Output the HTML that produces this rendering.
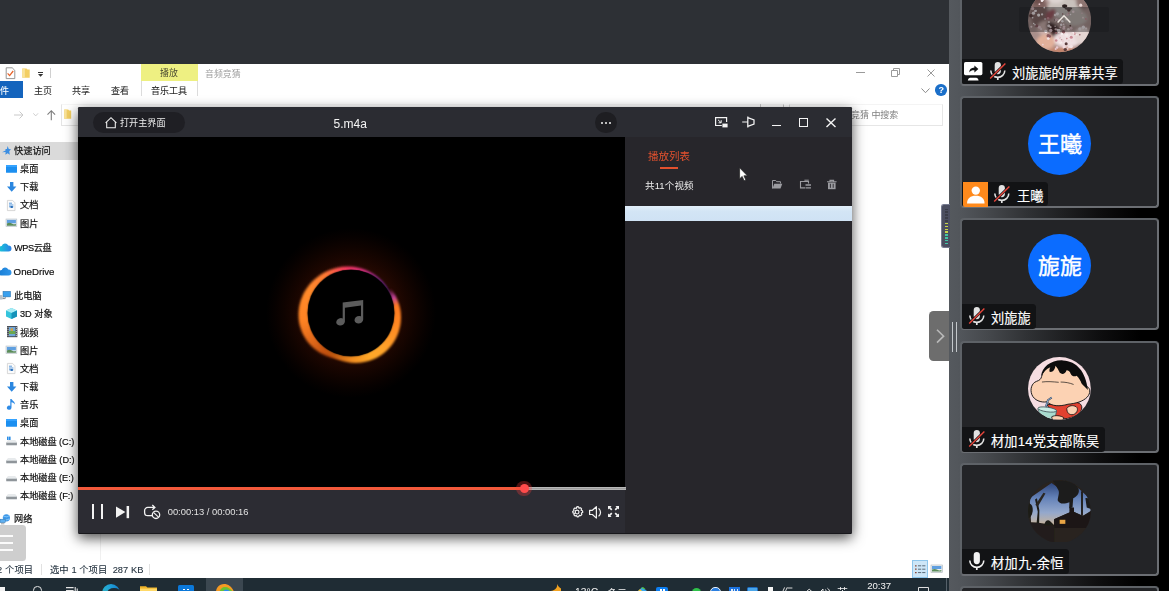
<!DOCTYPE html>
<html lang="zh"><head><meta charset="utf-8"><title>Meeting screen share</title>
<style>
html,body{margin:0;padding:0}
body{width:1174px;height:591px;overflow:hidden;position:relative;background:#000;font-family:"Liberation Sans",sans-serif}
#share{position:absolute;left:0;top:0;width:949px;height:591px;overflow:hidden;background:#2d3035}
#blur{position:absolute;left:-10px;top:-10px;width:980px;height:620px;background:#2d3035;filter:blur(.3px)}
#blur>div#o{position:absolute;left:10px;top:10px}
#side{position:absolute;left:949px;top:0;width:220px;height:591px;background:linear-gradient(to right,#55595e 0px,#52565b 11px,#45484c 39px,#303235 77px,#1e1f21 115px,#0d0d0e 153px,#000 191px)}
#edge{position:absolute;left:1169px;top:0;width:5px;height:591px;background:#fff}
svg text{font-family:"Liberation Sans","Noto Sans CJK SC",sans-serif;white-space:pre}
</style></head><body>
<div id="share"><div id="blur"><div id="o">
<div style="position:absolute;left:-10.00px;top:64.00px;width:969.00px;height:514.00px;background:#fff;"></div>
<svg style="position:absolute;left:5.00px;top:67.00px;overflow:visible;" width="11.00" height="12.50" viewBox="0 0 11 12.5"><path d="M1.2 .8h6l2.6 2.6v8.2h-8.6z" fill="#fff" stroke="#8a8a8a" stroke-width=".9"/><path d="M2.6 6.4l2 2.2 3.6-4.6" fill="none" stroke="#e8632a" stroke-width="1.3"/></svg>
<svg style="position:absolute;left:22.40px;top:67.80px;overflow:visible;" width="8.00" height="10.00" viewBox="0 0 8 10"><path d="M.3 .6h4.2l1 .9h2.2v8.2h-7.4z" fill="#f3cf63"/><path d="M.3 .6h2.6v9.1h-2.6z" fill="#f9e39a"/></svg>
<div style="position:absolute;left:37.80px;top:71.60px;width:5.20px;height:1.00px;background:#333;"></div>
<svg style="position:absolute;left:37.80px;top:73.60px;overflow:visible;" width="5.20" height="2.80" viewBox="0 0 5.2 2.8"><path d="M0 0h5.2l-2.6 2.8z" fill="#333"/></svg>
<div style="position:absolute;left:50.00px;top:68.00px;width:1.00px;height:10.00px;background:#d0d0d0;"></div>
<div style="position:absolute;left:141.00px;top:64.00px;width:57.00px;height:17.00px;background:#eef082;"></div>
<svg role="img" aria-label="播放" style="position:absolute;left:160.30px;top:67.75px;overflow:visible;" width="17.80" height="11.57"><text x="0" y="7.83" font-size="8.9" fill="#4d4d33" textLength="17.80">播放</text></svg>
<svg role="img" aria-label="音频竞猜" style="position:absolute;left:204.70px;top:68.55px;overflow:visible;" width="35.60" height="11.57"><text x="0" y="7.83" font-size="8.9" fill="#9d9d9d" textLength="35.60">音频竞猜</text></svg>
<div style="position:absolute;left:856.00px;top:72.00px;width:8.50px;height:1.00px;background:#9a9a9a;"></div>
<svg style="position:absolute;left:890.50px;top:68.00px;overflow:visible;" width="9.00" height="9.00" viewBox="0 0 9 9"><path d="M.5 2.5h6v6h-6z M2.5 2.5v-2h6v6h-2" fill="none" stroke="#9a9a9a" stroke-width="1"/></svg>
<svg style="position:absolute;left:926.50px;top:68.50px;overflow:visible;" width="8.00" height="8.00" viewBox="0 0 8 8"><path d="M.5 .5l7 7M7.5 .5l-7 7" stroke="#9a9a9a" stroke-width="1" fill="none"/></svg>
<div style="position:absolute;left:0.00px;top:81.00px;width:23.00px;height:17.00px;background:#1464bd;"></div>
<div style="position:absolute;left:0;top:81px;width:949px;height:14.2px;overflow:hidden">
<svg role="img" aria-label="文件" style="position:absolute;left:-8.60px;top:5.10px;overflow:visible;" width="18.00" height="11.70"><text x="0" y="7.92" font-size="9" fill="#fff" stroke="#fff" stroke-width=".072" textLength="18.00">文件</text></svg>
<svg role="img" aria-label="主页" style="position:absolute;left:33.80px;top:5.30px;overflow:visible;" width="18.00" height="11.70"><text x="0" y="7.92" font-size="9" fill="#262626" stroke="#262626" stroke-width=".072" textLength="18.00">主页</text></svg>
<svg role="img" aria-label="共享" style="position:absolute;left:72.40px;top:5.30px;overflow:visible;" width="18.00" height="11.70"><text x="0" y="7.92" font-size="9" fill="#262626" stroke="#262626" stroke-width=".072" textLength="18.00">共享</text></svg>
<svg role="img" aria-label="查看" style="position:absolute;left:111.20px;top:5.30px;overflow:visible;" width="18.00" height="11.70"><text x="0" y="7.92" font-size="9" fill="#262626" stroke="#262626" stroke-width=".072" textLength="18.00">查看</text></svg>
<svg role="img" aria-label="音乐工具" style="position:absolute;left:151.00px;top:5.30px;overflow:visible;" width="36.00" height="11.70"><text x="0" y="7.92" font-size="9" fill="#262626" stroke="#262626" stroke-width=".072" textLength="36.00">音乐工具</text></svg>
</div>
<div style="position:absolute;left:140.60px;top:81.00px;width:1.00px;height:14.50px;background:#dcdcdc;"></div>
<div style="position:absolute;left:197.30px;top:81.00px;width:1.00px;height:14.50px;background:#dcdcdc;"></div>
<svg style="position:absolute;left:920.50px;top:87.50px;overflow:visible;" width="9.00" height="5.50" viewBox="0 0 9 5.5"><path d="M.5 .5l4 4.2 4-4.2" fill="none" stroke="#8c8c8c" stroke-width="1"/></svg>
<div style="position:absolute;left:935.3px;top:84.3px;width:11.4px;height:11.4px;border-radius:50%;background:#1b6fc9"></div>
<div style="position:absolute;left:938.50px;top:84.90px;height:10.80px;line-height:10.80px;font-size:9.00px;color:#fff;white-space:pre;font-weight:bold">?</div>
<svg style="position:absolute;left:14.00px;top:110.50px;overflow:visible;" width="10.00" height="8.00" viewBox="0 0 10 8"><path d="M0 4h9M5.5 .5l3.5 3.5-3.5 3.5" fill="none" stroke="#c9c9c9" stroke-width="1"/></svg>
<svg style="position:absolute;left:33.00px;top:112.60px;overflow:visible;" width="5.40" height="3.60" viewBox="0 0 5.4 3.6"><path d="M.3 .3l2.4 2.6 2.4-2.6" fill="none" stroke="#c9c9c9" stroke-width=".9"/></svg>
<svg style="position:absolute;left:46.80px;top:109.80px;overflow:visible;" width="8.60" height="10.20" viewBox="0 0 8.6 10.2"><path d="M4.3 10.2v-9.4M.5 4.6l3.8-3.9 3.8 3.9" fill="none" stroke="#7d7d7d" stroke-width="1.1"/></svg>
<div style="position:absolute;left:60.5px;top:103.5px;width:723.5px;height:22px;border:1px solid #e4e4e4;border-top-color:#f6f6f6;border-right-color:#c4c4c4;box-sizing:border-box"></div>
<div style="position:absolute;left:760.00px;top:103.50px;width:1.00px;height:21.00px;background:#c8c8c8;"></div>
<div style="position:absolute;left:789.4px;top:103.5px;width:153.6px;height:22px;border:1px solid #e6e6e6;border-top-color:#f4f4f4;border-left-color:#dcdcdc;box-sizing:border-box"></div>
<svg style="position:absolute;left:64.00px;top:108.80px;overflow:visible;" width="7.40" height="10.00" viewBox="0 0 7.4 10"><path d="M.2 .6h4l1 .9h2v8.2h-7z" fill="#f3cf63"/><path d="M.2 .6h2.5v9.1h-2.5z" fill="#f9e39a"/></svg>
<svg role="img" aria-label="竞猜 中搜索" style="position:absolute;left:851.20px;top:110.30px;overflow:visible;" width="47.34" height="11.70"><text x="0" y="7.92" font-size="9" fill="#7f7f7f" textLength="47.34">竞猜 中搜索</text></svg>
<div style="position:absolute;left:0.00px;top:142.00px;width:90.00px;height:18.00px;background:#dadada;"></div>
<svg style="position:absolute;left:1.50px;top:146.00px;overflow:visible;" width="9.00" height="9.40" viewBox="0 0 9 9.4"><path d="M5.6 0l1.2 3 2.2.3-1.7 2 .5 3.4-2.2-1.4-2.2 1.4.2-2.6-3.6.2 3.5-1.9 0-1.3 1.4-.1z" fill="#3b8ee2"/></svg>
<svg role="img" aria-label="快速访问" style="position:absolute;left:13.80px;top:146.40px;overflow:visible;" width="36.80" height="11.96"><text x="0" y="8.10" font-size="9.2" fill="#111" stroke="#111" stroke-width=".2" textLength="36.80">快速访问</text></svg>
<svg style="position:absolute;left:6.00px;top:165.20px;overflow:visible;" width="11.00" height="7.80" viewBox="0 0 11 7.8"><rect width="11" height="7.8" rx=".6" fill="#1c8ff0"/><rect x="0" y="0" width="11" height="2" fill="#35a3ff"/></svg>
<svg role="img" aria-label="桌面" style="position:absolute;left:20.00px;top:164.20px;overflow:visible;" width="18.40" height="11.96"><text x="0" y="8.10" font-size="9.2" fill="#111" stroke="#111" stroke-width=".2" textLength="18.40">桌面</text></svg>
<svg style="position:absolute;left:6.80px;top:182.20px;overflow:visible;" width="9.40" height="9.80" viewBox="0 0 9.4 9.8"><path d="M3 0h3.4v4.6h3l-4.7 5.2-4.7-5.2h3z" fill="#2b87e0"/></svg>
<svg role="img" aria-label="下载" style="position:absolute;left:20.00px;top:182.30px;overflow:visible;" width="18.40" height="11.96"><text x="0" y="8.10" font-size="9.2" fill="#111" stroke="#111" stroke-width=".2" textLength="18.40">下载</text></svg>
<svg style="position:absolute;left:7.00px;top:199.80px;overflow:visible;" width="8.40" height="11.00" viewBox="0 0 8.4 11"><path d="M.4 .4h5.2l2.4 2.4v7.8h-7.6z" fill="#fbfbfb" stroke="#c9c9c9" stroke-width=".7"/><path d="M2 3.2h3M2 5h4.4M2 6.8h4.4" stroke="#4a90d8" stroke-width=".9"/><rect x="3.6" y="6" width="2.2" height="2" fill="#2d6fb8"/></svg>
<svg role="img" aria-label="文档" style="position:absolute;left:20.00px;top:200.40px;overflow:visible;" width="18.40" height="11.96"><text x="0" y="8.10" font-size="9.2" fill="#111" stroke="#111" stroke-width=".2" textLength="18.40">文档</text></svg>
<svg style="position:absolute;left:6.40px;top:219.20px;overflow:visible;" width="10.80" height="7.60" viewBox="0 0 10.8 7.6"><rect width="10.8" height="7.6" fill="#e9eef2" stroke="#b8c0c6" stroke-width=".6"/><rect x=".9" y=".9" width="9" height="3.4" fill="#5f9fe0"/><path d="M.9 6.7v-2.2c2-1.4 4-.6 5.4.2s2.6.8 3.6 0v2z" fill="#5b8c5a"/></svg>
<svg role="img" aria-label="图片" style="position:absolute;left:20.00px;top:218.60px;overflow:visible;" width="18.40" height="11.96"><text x="0" y="8.10" font-size="9.2" fill="#111" stroke="#111" stroke-width=".2" textLength="18.40">图片</text></svg>
<svg style="position:absolute;left:-1.00px;top:243.00px;overflow:visible;" width="12.00" height="8.60" viewBox="0 0 12 8.6"><defs><linearGradient id="cg243" x1="0" x2="1"><stop offset="0" stop-color="#19c6d6"/><stop offset="1" stop-color="#2a7fe8"/></linearGradient></defs><path d="M3 8.6a2.8 2.8 0 0 1-.3-5.6 3.6 3.6 0 0 1 6.6-.6 3.1 3.1 0 0 1 .2 6.200z" fill="url(#cg243)"/></svg>
<svg role="img" aria-label="WPS云盘" style="position:absolute;left:14.00px;top:243.00px;overflow:visible;" width="37.78" height="11.96"><text x="0" y="8.10" font-size="9.2" fill="#111" stroke="#111" stroke-width=".2" textLength="37.78">WPS云盘</text></svg>
<svg style="position:absolute;left:-1.00px;top:267.40px;overflow:visible;" width="12.00" height="8.60" viewBox="0 0 12 8.6"><defs><linearGradient id="cg267" x1="0" x2="1"><stop offset="0" stop-color="#1a7fd6"/><stop offset="1" stop-color="#2f95ea"/></linearGradient></defs><path d="M3 8.6a2.8 2.8 0 0 1-.3-5.6 3.6 3.6 0 0 1 6.6-.6 3.1 3.1 0 0 1 .2 6.200z" fill="url(#cg267)"/></svg>
<svg style="position:absolute;left:0.00px;top:291.00px;overflow:visible;" width="11.00" height="9.60" viewBox="0 0 11 9.6"><rect x="3" y=".3" width="7.6" height="5.6" fill="#39a0ee" stroke="#2d6fa8" stroke-width=".5"/><path d="M5.2 6v1.600h-2.400M0 7.200h4" stroke="#7c858c" stroke-width=".9" fill="none"/><rect x="0" y="4" width="2.6" height="4.6" fill="#b9c2c9"/></svg>
<svg role="img" aria-label="此电脑" style="position:absolute;left:14.00px;top:291.30px;overflow:visible;" width="27.60" height="11.96"><text x="0" y="8.10" font-size="9.2" fill="#111" stroke="#111" stroke-width=".2" textLength="27.60">此电脑</text></svg>
<svg style="position:absolute;left:6.00px;top:308.00px;overflow:visible;" width="11.00" height="11.00" viewBox="0 0 11 11"><path d="M5.5 0l5.5 2.400v6l-5.5 2.6-5.5-2.600v-6z" fill="#35c4dc"/><path d="M5.5 0l5.5 2.4-5.5 2.6-5.5-2.600z" fill="#a8ecf4"/><path d="M5.5 5v6l5.5-2.600v-6z" fill="#1592b8"/></svg>
<svg role="img" aria-label="3D 对象" style="position:absolute;left:20.00px;top:309.40px;overflow:visible;" width="32.60" height="11.96"><text x="0" y="8.10" font-size="9.2" fill="#111" stroke="#111" stroke-width=".2" textLength="32.60">3D 对象</text></svg>
<svg style="position:absolute;left:6.60px;top:326.40px;overflow:visible;" width="10.40" height="11.20" viewBox="0 0 10.4 11.2"><rect width="10.4" height="11.2" fill="#4a4f58"/><rect x="2" y="1" width="6.4" height="9.2" fill="#6fa6d8"/><rect x="2" y="5" width="6.4" height="3" fill="#6aa84f"/><rect x="3.6" y="2.4" width="2.4" height="2.4" fill="#e0a030"/><path d="M1 1v9.4M9.4 1v9.4" stroke="#d8d8d8" stroke-width=".8" stroke-dasharray="1 1"/></svg>
<svg role="img" aria-label="视频" style="position:absolute;left:20.00px;top:327.60px;overflow:visible;" width="18.40" height="11.96"><text x="0" y="8.10" font-size="9.2" fill="#111" stroke="#111" stroke-width=".2" textLength="18.40">视频</text></svg>
<svg style="position:absolute;left:6.40px;top:346.20px;overflow:visible;" width="10.80" height="7.60" viewBox="0 0 10.8 7.6"><rect width="10.8" height="7.6" fill="#e9eef2" stroke="#b8c0c6" stroke-width=".6"/><rect x=".9" y=".9" width="9" height="3.4" fill="#5f9fe0"/><path d="M.9 6.7v-2.2c2-1.4 4-.6 5.4.2s2.6.8 3.6 0v2z" fill="#5b8c5a"/></svg>
<svg role="img" aria-label="图片" style="position:absolute;left:20.00px;top:345.80px;overflow:visible;" width="18.40" height="11.96"><text x="0" y="8.10" font-size="9.2" fill="#111" stroke="#111" stroke-width=".2" textLength="18.40">图片</text></svg>
<svg style="position:absolute;left:7.00px;top:363.00px;overflow:visible;" width="8.40" height="11.00" viewBox="0 0 8.4 11"><path d="M.4 .4h5.2l2.4 2.4v7.8h-7.6z" fill="#fbfbfb" stroke="#c9c9c9" stroke-width=".7"/><path d="M2 3.2h3M2 5h4.4M2 6.8h4.4" stroke="#4a90d8" stroke-width=".9"/><rect x="3.6" y="6" width="2.2" height="2" fill="#2d6fb8"/></svg>
<svg role="img" aria-label="文档" style="position:absolute;left:20.00px;top:363.80px;overflow:visible;" width="18.40" height="11.96"><text x="0" y="8.10" font-size="9.2" fill="#111" stroke="#111" stroke-width=".2" textLength="18.40">文档</text></svg>
<svg style="position:absolute;left:6.80px;top:381.60px;overflow:visible;" width="9.40" height="9.80" viewBox="0 0 9.4 9.8"><path d="M3 0h3.4v4.6h3l-4.7 5.2-4.7-5.2h3z" fill="#2b87e0"/></svg>
<svg role="img" aria-label="下载" style="position:absolute;left:20.00px;top:381.90px;overflow:visible;" width="18.40" height="11.96"><text x="0" y="8.10" font-size="9.2" fill="#111" stroke="#111" stroke-width=".2" textLength="18.40">下载</text></svg>
<svg style="position:absolute;left:7.00px;top:399.00px;overflow:visible;" width="8.60" height="11.20" viewBox="0 0 8.6 11.2"><path d="M3.3 0h1.2c.6 1.6 3.6 2.4 3.4 5.6-.6-1.6-2-2.2-3.4-2.4v5.4a2.3 2.1 0 1 1-1.2-1.8z" fill="#2e8be6"/></svg>
<svg role="img" aria-label="音乐" style="position:absolute;left:20.00px;top:400.00px;overflow:visible;" width="18.40" height="11.96"><text x="0" y="8.10" font-size="9.2" fill="#111" stroke="#111" stroke-width=".2" textLength="18.40">音乐</text></svg>
<svg style="position:absolute;left:6.00px;top:418.80px;overflow:visible;" width="11.00" height="7.80" viewBox="0 0 11 7.8"><rect width="11" height="7.8" rx=".6" fill="#1c8ff0"/><rect x="0" y="0" width="11" height="2" fill="#35a3ff"/></svg>
<svg role="img" aria-label="桌面" style="position:absolute;left:20.00px;top:418.20px;overflow:visible;" width="18.40" height="11.96"><text x="0" y="8.10" font-size="9.2" fill="#111" stroke="#111" stroke-width=".2" textLength="18.40">桌面</text></svg>
<svg style="position:absolute;left:5.80px;top:439.00px;overflow:visible;" width="11.20" height="6.40" viewBox="0 0 11.2 6.4"><path d="M.3 3.6l1.6-2.2h7.4l1.6 2.2v2.6h-10.6z" fill="#cfd3d6"/><rect x=".3" y="3.6" width="10.6" height="2.6" fill="#8f959a"/><path d="M.3 3.6l1.6-2.2h7.4l1.6 2.2z" fill="#e8ebed"/><rect x="1" y="-2.4" width="1.6" height="3.4" fill="#2b8de6"/><rect x="3" y="-2.4" width="1.6" height="3.4" fill="#2b8de6"/></svg>
<svg role="img" aria-label="本地磁盘 (C:)" style="position:absolute;left:20.00px;top:436.60px;overflow:visible;" width="54.21" height="11.96"><text x="0" y="8.10" font-size="9.2" fill="#111" stroke="#111" stroke-width=".2" textLength="54.21">本地磁盘 (C:)</text></svg>
<svg style="position:absolute;left:5.80px;top:457.20px;overflow:visible;" width="11.20" height="6.40" viewBox="0 0 11.2 6.4"><path d="M.3 3.6l1.6-2.2h7.4l1.6 2.2v2.6h-10.6z" fill="#cfd3d6"/><rect x=".3" y="3.6" width="10.6" height="2.6" fill="#8f959a"/><path d="M.3 3.6l1.6-2.2h7.4l1.6 2.2z" fill="#e8ebed"/></svg>
<svg role="img" aria-label="本地磁盘 (D:)" style="position:absolute;left:20.00px;top:454.70px;overflow:visible;" width="54.67" height="11.96"><text x="0" y="8.10" font-size="9.2" fill="#111" stroke="#111" stroke-width=".2" textLength="54.67">本地磁盘 (D:)</text></svg>
<svg style="position:absolute;left:5.80px;top:475.20px;overflow:visible;" width="11.20" height="6.40" viewBox="0 0 11.2 6.4"><path d="M.3 3.6l1.6-2.2h7.4l1.6 2.2v2.6h-10.6z" fill="#cfd3d6"/><rect x=".3" y="3.6" width="10.6" height="2.6" fill="#8f959a"/><path d="M.3 3.6l1.6-2.2h7.4l1.6 2.2z" fill="#e8ebed"/></svg>
<svg role="img" aria-label="本地磁盘 (E:)" style="position:absolute;left:20.00px;top:472.70px;overflow:visible;" width="53.76" height="11.96"><text x="0" y="8.10" font-size="9.2" fill="#111" stroke="#111" stroke-width=".2" textLength="53.76">本地磁盘 (E:)</text></svg>
<svg style="position:absolute;left:5.80px;top:493.30px;overflow:visible;" width="11.20" height="6.40" viewBox="0 0 11.2 6.4"><path d="M.3 3.6l1.6-2.2h7.4l1.6 2.2v2.6h-10.6z" fill="#cfd3d6"/><rect x=".3" y="3.6" width="10.6" height="2.6" fill="#8f959a"/><path d="M.3 3.6l1.6-2.2h7.4l1.6 2.2z" fill="#e8ebed"/></svg>
<svg role="img" aria-label="本地磁盘 (F:)" style="position:absolute;left:20.00px;top:490.80px;overflow:visible;" width="53.42" height="11.96"><text x="0" y="8.10" font-size="9.2" fill="#111" stroke="#111" stroke-width=".2" textLength="53.42">本地磁盘 (F:)</text></svg>
<svg style="position:absolute;left:0.00px;top:514.00px;overflow:visible;" width="10.60" height="10.00" viewBox="0 0 10.6 10"><circle cx="6.4" cy="3.8" r="3.6" fill="#3c97e8"/><path d="M3.5 2.600c1.4-.8 2.6.8 4 0s1.8-1 2.4-.4M3.6 5.400c1.6.8 3.4.6 5.600-.4" stroke="#9ed8ff" stroke-width=".8" fill="none"/><rect x="0" y="5.2" width="5.2" height="3.4" fill="#5fb0f0" stroke="#2d6fa8" stroke-width=".5"/><path d="M1 9.800h3.4" stroke="#7c858c" stroke-width=".8"/></svg>
<svg role="img" aria-label="网络" style="position:absolute;left:14.00px;top:514.40px;overflow:visible;" width="18.40" height="11.96"><text x="0" y="8.10" font-size="9.2" fill="#111" stroke="#111" stroke-width=".2" textLength="18.40">网络</text></svg>
<div style="position:absolute;left:13.60px;top:265.78px;height:11.64px;line-height:11.64px;font-size:9.70px;color:#111;white-space:pre;-webkit-text-stroke:.2px #111">OneDrive</div>
<div style="position:absolute;left:100.30px;top:126.00px;width:1.00px;height:434.00px;background:#f0f0f0;"></div>
<div style="position:absolute;left:-4px;top:524.6px;width:30px;height:36px;border-radius:3.5px;background:#cecece"></div>
<div style="position:absolute;left:0.00px;top:534.90px;width:13.20px;height:2.00px;background:#fbfbfb;"></div>
<div style="position:absolute;left:0.00px;top:542.10px;width:13.20px;height:2.00px;background:#fbfbfb;"></div>
<div style="position:absolute;left:0.00px;top:549.30px;width:13.20px;height:2.00px;background:#fbfbfb;"></div>
<svg role="img" aria-label="2 个项目" style="position:absolute;left:-2.60px;top:564.75px;overflow:visible;" width="36.13" height="12.09"><text x="0" y="8.18" font-size="9.3" fill="#1c2b38" stroke="#1c2b38" stroke-width=".093" textLength="36.13">2 个项目</text></svg>
<div style="position:absolute;left:41.20px;top:563.50px;width:1.00px;height:11.50px;background:#e1e1e1;"></div>
<svg role="img" aria-label="选中 1 个项目  287 KB" style="position:absolute;left:49.80px;top:564.75px;overflow:visible;" width="93.42" height="12.09"><text x="0" y="8.18" font-size="9.3" fill="#1c2b38" stroke="#1c2b38" stroke-width=".093" textLength="93.42" xml:space="preserve">选中 1 个项目  287 KB</text></svg>
<div style="position:absolute;left:149.40px;top:563.50px;width:1.00px;height:11.50px;background:#e1e1e1;"></div>
<div style="position:absolute;left:912px;top:560px;width:16.4px;height:17.6px;box-sizing:border-box;background:#cde6f7;border:1px solid #8ec6ec"></div>
<svg style="position:absolute;left:914.60px;top:564.60px;overflow:visible;" width="11.00" height="8.40" viewBox="0 0 11 8.4"><path d="M0 .8h1.600M0 4.200h1.600M0 7.600h1.6" stroke="#8a4a3a" stroke-width="1.2"/><path d="M3 .8h3.200M7.2 .8h3.200M3 4.200h3.200M7.2 4.200h3.200M3 7.600h3.200M7.2 7.600h3.2" stroke="#5a6a78" stroke-width="1"/></svg>
<svg style="position:absolute;left:931.00px;top:565.30px;overflow:visible;" width="11.40" height="7.60" viewBox="0 0 11.4 7.6"><rect width="11.4" height="7.6" fill="#eef1f4" stroke="#aab2b9" stroke-width=".6"/><rect x="1" y="1" width="9.4" height="3" fill="#5f9fe0"/><path d="M1 6.600v-2c2-1.2 4-.6 5.4.2s3 .8 4 0v1.800z" fill="#5b8c5a"/></svg>
<div style="position:absolute;left:-10.00px;top:577.80px;width:969.00px;height:24.00px;background:#1f2c34;"></div>
<div style="position:absolute;left:-1.00px;top:586.80px;width:6.00px;height:6.00px;background:#f2f2f2;"></div>
<div style="position:absolute;left:33px;top:586.2px;width:8.6px;height:8.6px;border-radius:50%;border:1.1px solid #e6e6e6;box-sizing:border-box"></div>
<svg style="position:absolute;left:65.60px;top:586.60px;overflow:visible;" width="12.00" height="5.00" viewBox="0 0 12 5"><path d="M0 .6h7.600M0 3.600h7.600M9.2 0v5M11.2 1.400v3.6" stroke="#e6e6e6" stroke-width="1.1" fill="none"/></svg>
<div style="position:absolute;left:101.6px;top:583.6px;width:18.6px;height:18.6px;border-radius:50%;background:conic-gradient(from 200deg,#35c1b1,#1fa2d8 40%,#1275c9 70%,#35c1b1)"></div>
<div style="position:absolute;left:106.6px;top:588.2px;width:14px;height:10px;border-radius:50%;background:#1f2c34"></div>
<svg style="position:absolute;left:139.60px;top:584.60px;overflow:visible;" width="17.00" height="7.00" viewBox="0 0 17 7"><path d="M0 1.200h6l1.4 1.200h9.600v5h-17z" fill="#f0b429"/><path d="M0 3.600h17v4h-17z" fill="#ffd968"/></svg>
<div style="position:absolute;left:177.8px;top:585.4px;width:16.4px;height:8px;border-radius:1.5px 1.5px 0 0;background:#0b78d9"></div>
<div style="position:absolute;left:183.20px;top:588.60px;width:1.60px;height:1.60px;background:#fff;"></div>
<div style="position:absolute;left:187.40px;top:588.60px;width:1.60px;height:1.60px;background:#fff;"></div>
<div style="position:absolute;left:206.00px;top:577.80px;width:36.80px;height:14.00px;background:#3b4750;"></div>
<svg style="position:absolute;left:214.60px;top:582.80px;overflow:visible;" width="19.00" height="9.00" viewBox="0 0 19 9"><path d="M1 9c0-4 3-8 8-8 4 0 8 2.4 10 8z" fill="#f59a23"/><path d="M4.5 9c.5-3 2.8-5 5.500-5 3 0 6 2 8 5z" fill="#69c230"/><path d="M8 9c.5-1.600 1.600-2.600 3-2.600 1.800 0 3.600 1 5.200 2.600z" fill="#2c8cf0"/></svg>
<svg style="position:absolute;left:550.40px;top:583.60px;overflow:visible;" width="11.00" height="8.00" viewBox="0 0 11 8"><path d="M7 0c.6 2.600-.6 5.200-4 6.600-1 .4-2 .6-3 .4v1h11v-3.400c-1.400-1-3-2.600-4-4.600z" fill="#f3a321"/></svg>
<div style="position:absolute;left:575.00px;top:587.16px;height:12.48px;line-height:12.48px;font-size:10.40px;color:#f2f2f2;white-space:pre;">13°C</div>
<svg role="img" aria-label="多云" style="position:absolute;left:606.60px;top:588.00px;overflow:visible;" width="20.00" height="13.00"><text x="0" y="8.80" font-size="10" fill="#f2f2f2" textLength="20.00">多云</text></svg>
<svg style="position:absolute;left:637.00px;top:586.60px;overflow:visible;" width="11.40" height="5.00" viewBox="0 0 11.4 5"><path d="M0 5l5-4.800 6.400 4.800z" fill="#35a8f0"/><path d="M0 5l3-3 3 3z" fill="#f2c230"/><path d="M4 1.200l2-1.200 3 2.600z" fill="#58c840"/></svg>
<div style="position:absolute;left:656px;top:586.8px;width:12px;height:8px;border-radius:2px 2px 0 0;background:#0d7ff2"></div>
<div style="position:absolute;left:660.20px;top:589.40px;width:1.40px;height:1.60px;background:#fff;"></div>
<div style="position:absolute;left:663.40px;top:589.40px;width:1.40px;height:1.60px;background:#fff;"></div>
<div style="position:absolute;left:691.8px;top:587.6px;width:9px;height:9px;border-radius:50%;background:#2fc24a"></div>
<div style="position:absolute;left:710px;top:587.2px;width:11px;height:8px;border-radius:5px 5px 0 0;border:1.6px solid #e9f2fb;box-sizing:border-box;background:#2b7fe0"></div>
<div style="position:absolute;left:728.60px;top:587.00px;width:11.40px;height:5.00px;background:#1d74e0;"></div>
<div style="position:absolute;left:731.40px;top:588.80px;width:1.20px;height:2.40px;background:#dfe9f5;"></div>
<div style="position:absolute;left:734.00px;top:588.80px;width:1.20px;height:2.40px;background:#dfe9f5;"></div>
<div style="position:absolute;left:736.60px;top:588.80px;width:1.20px;height:2.40px;background:#dfe9f5;"></div>
<div style="position:absolute;left:746.6px;top:586.8px;width:11.2px;height:6px;border-radius:1.5px;background:#4aa6ea;border:1px solid #1b6cc4;box-sizing:border-box"></div>
<div style="position:absolute;left:768.00px;top:586.80px;width:4.60px;height:5.00px;background:#f4f4f4;"></div>
<svg style="position:absolute;left:783.00px;top:587.40px;overflow:visible;" width="10.00" height="4.00" viewBox="0 0 10 4"><path d="M0 4l1.600-3.600M2.600 4l1.600-3.600M4.400 1h5" stroke="#d9d9d9" stroke-width="1" fill="none"/></svg>
<svg style="position:absolute;left:806.00px;top:588.60px;overflow:visible;" width="6.40" height="3.00" viewBox="0 0 6.4 3"><path d="M0 3l3.200-2.800 3.200 2.800" stroke="#e0e0e0" stroke-width="1" fill="none"/></svg>
<svg style="position:absolute;left:820.00px;top:587.60px;overflow:visible;" width="11.00" height="4.00" viewBox="0 0 11 4"><path d="M0 4l3-3v3M5 1.400c1 .6 1.400 1.600 1.400 2.600M7.400 .2c1.600 1 2.200 2.400 2.200 3.800" stroke="#e0e0e0" stroke-width="1" fill="none"/></svg>
<svg role="img" aria-label="英" style="position:absolute;left:836.60px;top:587.10px;overflow:visible;" width="11.00" height="14.30"><text x="0" y="9.68" font-size="11" fill="#f2f2f2">英</text></svg>
<div style="position:absolute;left:867.20px;top:579.84px;height:11.52px;line-height:11.52px;font-size:9.60px;color:#f4f4f4;white-space:pre;">20:37</div>
<svg style="position:absolute;left:918.00px;top:587.00px;overflow:visible;" width="11.00" height="4.40" viewBox="0 0 11 4.4"><path d="M.5 4.400v-3.900h10v3.9" stroke="#e0e0e0" stroke-width="1" fill="none"/></svg>
<div style="position:absolute;left:945.60px;top:577.80px;width:1.00px;height:14.00px;background:#55616a;"></div>
<div style="position:absolute;left:78px;top:107.2px;width:774px;height:426.8px;background:#17171b;border-radius:1.5px;box-shadow:0 4px 13px rgba(0,0,0,.7)"></div>
<div style="position:absolute;left:78.00px;top:107.20px;width:774.00px;height:29.60px;background:#2b2c32;border-radius:1.5px 1.5px 0 0"></div>
<div style="position:absolute;left:78.00px;top:136.80px;width:547.20px;height:353.20px;background:#000;"></div>
<div style="position:absolute;left:625.20px;top:136.80px;width:226.80px;height:395.80px;background:#27262b;"></div>
<div style="position:absolute;left:78.00px;top:490.00px;width:547.20px;height:42.60px;background:#2c2c33;"></div>
<div style="position:absolute;left:93.2px;top:111.9px;width:91.8px;height:20.9px;border-radius:10.5px;background:#1f1f24"></div>
<svg style="position:absolute;left:104.60px;top:116.60px;overflow:visible;" width="12.00" height="11.40" viewBox="0 0 12 11.4"><path d="M.6 5.900l5.400-5.200 5.400 5.200M1.700 5.200v5.600h8.600v-5.600" fill="none" stroke="#f0f0f0" stroke-width="1.050"/></svg>
<svg role="img" aria-label="打开主界面" style="position:absolute;left:119.90px;top:118.35px;overflow:visible;" width="45.50" height="11.83"><text x="0" y="8.01" font-size="9.1" fill="#ececec" textLength="45.50">打开主界面</text></svg>
<div style="position:absolute;left:333.60px;top:116.60px;height:14.40px;line-height:14.40px;font-size:12.00px;color:#f4f4f4;white-space:pre;">5.m4a</div>
<div style="position:absolute;left:595.3px;top:112px;width:21.4px;height:21.4px;border-radius:50%;background:#1e1e22"></div>
<div style="position:absolute;left:601.20px;top:121.70px;width:2.10px;height:2.10px;background:#f2f2f2;border-radius:50%"></div>
<div style="position:absolute;left:605.00px;top:121.70px;width:2.10px;height:2.10px;background:#f2f2f2;border-radius:50%"></div>
<div style="position:absolute;left:608.80px;top:121.70px;width:2.10px;height:2.10px;background:#f2f2f2;border-radius:50%"></div>
<svg style="position:absolute;left:714.60px;top:117.00px;overflow:visible;" width="12.60" height="10.60" viewBox="0 0 12.6 10.6"><path d="M6.8 8.500h-6.200v-7.900h11v4.4" fill="none" stroke="#f4f4f4" stroke-width="1.2"/><rect x="7.4" y="6.6" width="5.2" height="3.8" fill="#f4f4f4"/><path d="M3 2.800l3 2.800M6.200 3.200v2.600h-2.600" fill="none" stroke="#f4f4f4" stroke-width="1"/></svg>
<svg style="position:absolute;left:741.60px;top:116.40px;overflow:visible;" width="12.80" height="12.00" viewBox="0 0 12.8 12"><path d="M.2 6h5.600M5.800 .4v11.200M5.800 1.600l6.200 2.400v4l-6.200 2.400" fill="none" stroke="#f4f4f4" stroke-width="1.250"/></svg>
<div style="position:absolute;left:771.80px;top:125.00px;width:9.20px;height:1.40px;background:#f4f4f4;"></div>
<div style="position:absolute;left:798.8px;top:118.2px;width:9.500px;height:8.800px;box-sizing:border-box;border:1.500px solid #f4f4f4"></div>
<svg style="position:absolute;left:826.00px;top:117.60px;overflow:visible;" width="10.00" height="9.60" viewBox="0 0 10 9.6"><path d="M.5 .5l9 8.600M9.500 .5l-9 8.6" stroke="#f4f4f4" stroke-width="1.4" fill="none"/></svg>
<svg role="img" aria-label="播放列表" style="position:absolute;left:647.70px;top:151.35px;overflow:visible;" width="42.00" height="13.65"><text x="0" y="9.24" font-size="10.5" fill="#e2512e" textLength="42.00">播放列表</text></svg>
<div style="position:absolute;left:659.80px;top:166.80px;width:18.60px;height:2.00px;background:#e2512e;"></div>
<svg role="img" aria-label="共11个视频" style="position:absolute;left:644.70px;top:180.85px;overflow:visible;" width="48.55" height="12.35"><text x="0" y="8.36" font-size="9.5" fill="#ececec" textLength="48.55">共11个视频</text></svg>
<svg style="position:absolute;left:772.40px;top:180.20px;overflow:visible;" width="10.60" height="9.00" viewBox="0 0 10.6 9"><path d="M.5 8.500v-8h3.200l1 1.200h3.800v1.8" fill="none" stroke="#9b9ba0" stroke-width="1"/><path d="M.5 8.500l1.800-4.800h8l-1.800 4.800z" fill="#9b9ba0"/></svg>
<svg style="position:absolute;left:799.50px;top:180.40px;overflow:visible;" width="11.00" height="8.80" viewBox="0 0 11 8.8"><path d="M5 7.900h-4.500v-6.400h8v2" fill="none" stroke="#9b9ba0" stroke-width="1.1"/><path d="M4.400 .2h4.400" stroke="#9b9ba0" stroke-width="1"/><path d="M5.500 5h5.500M5.500 7.900h5.500" stroke="#9b9ba0" stroke-width="1.3"/></svg>
<svg style="position:absolute;left:826.80px;top:180.00px;overflow:visible;" width="9.60" height="9.20" viewBox="0 0 9.6 9.2"><path d="M0 1.800h9.600M3 1.600v-1.200h3.600v1.2" fill="none" stroke="#9b9ba0" stroke-width="1.1"/><path d="M1 2.600h7.600v6.600h-7.600z" fill="#9b9ba0"/><path d="M3.400 3.800v4M6.200 3.800v4" stroke="#27262b" stroke-width=".9"/></svg>
<div style="position:absolute;left:625.20px;top:205.60px;width:226.80px;height:15.20px;background:linear-gradient(#e2effa 0,#d3e5f5 35%,#cfe2f4 100%);"></div>
<svg style="position:absolute;left:738.60px;top:167.00px;overflow:visible;" width="9.00" height="14.40" viewBox="0 0 9 14.4"><path d="M.6 .8v11l2.600-2.400 1.900 4.300 1.700-.8-1.900-4.100h3.500z" fill="#fff" stroke="#222" stroke-width=".7"/></svg>
<div style="position:absolute;left:265.9px;top:228.2px;width:170px;height:170px;border-radius:50%;background:radial-gradient(circle closest-side,rgba(60,14,2,.6) 0,rgba(60,14,2,.6) 55%,rgba(52,11,1,.5) 65%,rgba(40,8,0,.38) 78%,rgba(30,5,0,.2) 90%,rgba(0,0,0,0) 100%)"></div>
<div style="position:absolute;left:298.4px;top:267.2px;width:96px;height:92px;border-radius:50%;transform:rotate(-28deg);filter:blur(.8px);background:conic-gradient(from 28deg,#ff3a62 0deg,#f0348a 22deg,#a238cc 50deg,#8a34c8 62deg,rgba(255,130,40,0) 80deg,rgba(255,130,40,0) 170deg,#b8480c 200deg,#e0681a 230deg,#ff8424 262deg,#ff8a2a 300deg,#ff7a34 332deg,#ff3a62 360deg)"></div>
<div style="position:absolute;left:309.6px;top:271.6px;width:91px;height:91px;border-radius:50%;filter:blur(.8px);background:conic-gradient(from 0deg,rgba(255,60,100,0) 0deg,rgba(140,50,190,0) 50deg,#c0409a 62deg,#ff7a22 74deg,#ff8822 100deg,#ffa42a 140deg,#ffa828 160deg,#f08c20 185deg,#c05a10 210deg,rgba(180,70,10,0) 232deg,rgba(255,120,30,0) 360deg)"></div>
<div style="position:absolute;left:307.9px;top:270.2px;width:86px;height:86px;border-radius:50%;background:#000;box-shadow:0 0 1.2px .6px #000"></div>
<svg style="position:absolute;left:335.40px;top:300.00px;overflow:visible;" width="28.40" height="27.20" viewBox="0 0 28.4 27.2"><path d="M7.7 2.600l20.5-2.600v19.400a4.4 3.7 -18 1 1-2.200-3.100v-10.700l-16.100 2.100v13.800a4.4 3.7 -18 1 1-2.200-3.100z" fill="#5c5c5c"/></svg>
<div style="position:absolute;left:78.00px;top:486.80px;width:446.00px;height:3.20px;background:#f2593b;"></div>
<div style="position:absolute;left:524.00px;top:486.90px;width:101.80px;height:3.20px;background:linear-gradient(#c4c4c4,#9c9c9c 50%,#bdbdbd);"></div>
<div style="position:absolute;left:516.300px;top:480.500px;width:15.600px;height:15.600px;border-radius:50%;background:rgba(255,60,60,.3)"></div>
<div style="position:absolute;left:519.500px;top:483.700px;width:9.200px;height:9.200px;border-radius:50%;background:#ff4b4b"></div>
<div style="position:absolute;left:92.10px;top:504.20px;width:2.20px;height:14.50px;background:#f3f3f3;"></div>
<div style="position:absolute;left:100.50px;top:504.20px;width:2.20px;height:14.50px;background:#f3f3f3;"></div>
<svg style="position:absolute;left:116.30px;top:505.60px;overflow:visible;" width="13.20" height="12.20" viewBox="0 0 13.2 12.2"><path d="M0 .4l9.400 5.700-9.400 5.700z" fill="#f3f3f3"/><rect x="10.6" y="0" width="2.5" height="12.2" fill="#f3f3f3"/></svg>
<svg style="position:absolute;left:143.60px;top:505.40px;overflow:visible;" width="16.60" height="14.40" viewBox="0 0 16.6 14.4"><path d="M10.2 10.600h-6.400a3.2 3.2 0 0 1-3.200-3.200v-1.800a3.2 3.2 0 0 1 3.200-3.200h6.800M8.300 0l2.600 2.400-2.600 2.400" fill="none" stroke="#f3f3f3" stroke-width="1.3"/><circle cx="12" cy="9.8" r="3.7" fill="#2b2b31" stroke="#f3f3f3" stroke-width="1.3"/><path d="M9.500 7.400l5 4.800" stroke="#f3f3f3" stroke-width="1.2"/></svg>
<div style="position:absolute;left:167.70px;top:506.16px;height:11.28px;line-height:11.28px;font-size:9.40px;color:#e2e2e2;white-space:pre;">00:00:13 / 00:00:16</div>
<svg style="position:absolute;left:570.90px;top:505.90px;overflow:visible;" width="12.20" height="12.20" viewBox="0 0 12.2 12.2"><path d="M6.1 .6l1.5 .3.5 1.4 1.4-.5 1.1 1.1-.5 1.4 1.4.5.3 1.5-1.3.8.3 1.5-1.1 1.1-1.4-.5-.5 1.4-1.5.3-.800-1.3-1.5.3-1.1-1.1.5-1.4-1.4-.5-.3-1.5 1.3-.8-.3-1.5 1.1-1.1 1.4.5.5-1.400z" fill="none" stroke="#f3f3f3" stroke-width="1.2" stroke-linejoin="round"/><circle cx="6.1" cy="6.1" r="1.9" fill="none" stroke="#f3f3f3" stroke-width="1.2"/></svg>
<svg style="position:absolute;left:589.00px;top:505.60px;overflow:visible;" width="12.40" height="12.80" viewBox="0 0 12.4 12.8"><path d="M.6 4.300h2.800l4-3.600v11.400l-4-3.600h-2.800z" fill="none" stroke="#f3f3f3" stroke-width="1.2" stroke-linejoin="round"/><path d="M9.600 2.400c2.600 2.400 2.600 5.600 0 8" fill="none" stroke="#f3f3f3" stroke-width="1.2"/></svg>
<svg style="position:absolute;left:607.80px;top:506.40px;overflow:visible;" width="11.00" height="11.00" viewBox="0 0 11 11"><path d="M0 0h3.600l-1.200 1.200 2 2-1.200 1.200-2-2-1.200 1.200zM11 0v3.600l-1.200-1.200-2 2-1.200-1.200 2-2-1.200-1.200zM0 11v-3.600l1.200 1.200 2-2 1.200 1.200-2 2 1.200 1.200zM11 11h-3.600l1.200-1.200-2-2 1.200-1.200 2 2 1.200-1.200z" fill="#f3f3f3"/></svg>
</div></div></div>
<div id="side"></div>
<div id="edge"></div>
<div style="position:absolute;left:959.600px;top:-26.70px;width:199.800px;height:112.200px;box-sizing:border-box;border:2px solid #5e6267;border-right-color:#6b6e73;border-bottom-color:#6b6e73;border-radius:4px;background:#232427"></div>
<svg style="position:absolute;left:1027.80px;top:-10.70px" width="63.2" height="63.2" viewBox="0 0 100 100"><defs><clipPath id="c1"><circle cx="50" cy="50" r="50"/></clipPath><filter id="b1" x="-20%" y="-20%" width="140%" height="140%"><feGaussianBlur stdDeviation="2.4"/></filter><filter id="b1s" x="-20%" y="-20%" width="140%" height="140%"><feGaussianBlur stdDeviation=".7"/></filter></defs><g clip-path="url(#c1)"><rect width="100" height="100" fill="#a98f8b"/><g filter="url(#b1)"><ellipse cx="58" cy="30" rx="27" ry="17" fill="#c9c1bc"/><ellipse cx="74" cy="46" rx="20" ry="13" fill="#bdb3ad"/><ellipse cx="18" cy="38" rx="14" ry="24" fill="#806460"/><ellipse cx="30" cy="62" rx="16" ry="12" fill="#cdb0ab"/><ellipse cx="42" cy="66" rx="8" ry="17" transform="rotate(-40 42 66)" fill="#3f2725"/><ellipse cx="62" cy="80" rx="22" ry="13" fill="#efe0e2"/><ellipse cx="28" cy="84" rx="15" ry="12" fill="#e2b09a"/><ellipse cx="86" cy="74" rx="13" ry="14" fill="#e4d6d3"/><ellipse cx="36" cy="40" rx="10" ry="6" transform="rotate(-50 36 40)" fill="#9c525c"/><ellipse cx="44" cy="14" rx="14" ry="9" fill="#ddd4d2"/><ellipse cx="14" cy="14" rx="12" ry="10" fill="#6e504e"/><ellipse cx="88" cy="20" rx="12" ry="12" fill="#8e7471"/><ellipse cx="58" cy="97" rx="26" ry="5" fill="#c4846c"/></g><g filter="url(#b1s)"><circle cx="43.1" cy="63.8" r="1.2" fill="#e8d8d6"/><circle cx="55.0" cy="39.5" r="1.2" fill="#8c5a5e"/><circle cx="43.3" cy="49.7" r="1.8" fill="#5a3b3a"/><circle cx="52.0" cy="83.5" r="2.5" fill="#f4e9ea"/><circle cx="63.9" cy="63.7" r="2.1" fill="#e8d8d6"/><circle cx="82.2" cy="63.2" r="2.8" fill="#f4e9ea"/><circle cx="91.9" cy="62.6" r="1.8" fill="#f3e2e4"/><circle cx="16.8" cy="41.3" r="2.5" fill="#fbf3f3"/><circle cx="64.6" cy="81.4" r="1.4" fill="#e8d8d6"/><circle cx="82.0" cy="72.5" r="1.2" fill="#8c5a5e"/><circle cx="60.4" cy="86.6" r="2.4" fill="#5a3b3a"/><circle cx="5.3" cy="59.8" r="1.6" fill="#ead3d6"/><circle cx="51.3" cy="84.4" r="1.9" fill="#fbf3f3"/><circle cx="33.6" cy="74.7" r="2.8" fill="#8c5a5e"/><circle cx="71.0" cy="69.2" r="1.4" fill="#ead3d6"/><circle cx="43.1" cy="50.5" r="1.2" fill="#e8d8d6"/><circle cx="11.1" cy="35.1" r="1.7" fill="#ead3d6"/><circle cx="31.4" cy="75.5" r="1.2" fill="#c98a93"/><circle cx="68.2" cy="62.1" r="2.2" fill="#d9b9bd"/><circle cx="86.0" cy="64.4" r="2.1" fill="#e8d8d6"/><circle cx="23.5" cy="87.9" r="1.4" fill="#ead3d6"/><circle cx="56.5" cy="55.9" r="1.3" fill="#f3e2e4"/><circle cx="50.4" cy="77.3" r="1.2" fill="#c98a93"/><circle cx="18.2" cy="60.5" r="2.5" fill="#e9c9cf"/><circle cx="64.6" cy="33.2" r="2.8" fill="#5a3b3a"/><circle cx="51.3" cy="60.7" r="1.5" fill="#e9c9cf"/><circle cx="53.3" cy="80.9" r="1.4" fill="#8c5a5e"/><circle cx="47.0" cy="64.8" r="1.7" fill="#fbf3f3"/><circle cx="7.4" cy="31.1" r="2.6" fill="#d9b9bd"/><circle cx="85.4" cy="38.5" r="1.2" fill="#d9b9bd"/><circle cx="83.4" cy="25.6" r="2.5" fill="#e8d8d6"/><circle cx="28.4" cy="67.3" r="1.9" fill="#f7eef0"/><circle cx="35.6" cy="60.4" r="1.8" fill="#f0dadd"/><circle cx="77.3" cy="72.5" r="1.1" fill="#f7eef0"/><circle cx="57.1" cy="59.9" r="2.1" fill="#ead3d6"/><circle cx="66.9" cy="58.0" r="1.4" fill="#5a3b3a"/><circle cx="49.6" cy="75.5" r="1.9" fill="#ead3d6"/><circle cx="73.4" cy="70.7" r="1.9" fill="#c98a93"/><circle cx="44.3" cy="63.9" r="1.7" fill="#d9b9bd"/><circle cx="46.0" cy="92.7" r="2.0" fill="#e9c9cf"/><circle cx="62.9" cy="94.8" r="1.3" fill="#ead3d6"/><circle cx="44.7" cy="48.5" r="1.6" fill="#fbf3f3"/><circle cx="42.9" cy="41.1" r="2.0" fill="#f3e2e4"/><circle cx="71.6" cy="35.9" r="2.0" fill="#f0dadd"/><circle cx="57.1" cy="91.7" r="2.5" fill="#f0dadd"/><circle cx="54.7" cy="82.0" r="2.3" fill="#ead3d6"/><circle cx="91.6" cy="47.3" r="1.5" fill="#c98a93"/><circle cx="33.5" cy="6.3" r="2.5" fill="#c98a93"/><circle cx="60.5" cy="48.3" r="1.5" fill="#f7eef0"/><circle cx="56.1" cy="67.5" r="2.8" fill="#8c5a5e"/><circle cx="49.1" cy="49.3" r="1.7" fill="#e8d8d6"/><circle cx="23.2" cy="16.3" r="2.6" fill="#f7eef0"/><circle cx="33.1" cy="52.4" r="1.7" fill="#e8d8d6"/><circle cx="28.0" cy="66.9" r="2.3" fill="#f7eef0"/><circle cx="56.7" cy="62.2" r="2.1" fill="#e9c9cf"/><circle cx="13.6" cy="58.1" r="2.5" fill="#8c5a5e"/><circle cx="87.0" cy="45.4" r="1.4" fill="#ead3d6"/><circle cx="45.4" cy="48.6" r="2.2" fill="#d9b9bd"/><circle cx="4.6" cy="42.3" r="2.8" fill="#5a3b3a"/><circle cx="65.0" cy="91.6" r="1.5" fill="#f4e9ea"/><circle cx="44.6" cy="69.7" r="1.7" fill="#8c5a5e"/><circle cx="8.6" cy="38.2" r="2.6" fill="#f4e9ea"/><circle cx="31.8" cy="73.9" r="2.5" fill="#8c5a5e"/><circle cx="7.4" cy="45.5" r="1.3" fill="#fbf3f3"/><circle cx="68.5" cy="76.2" r="2.4" fill="#c98a93"/><circle cx="18.0" cy="24.0" r="1.4" fill="#e9c9cf"/><circle cx="11.0" cy="56.6" r="1.2" fill="#fbf3f3"/><circle cx="9.0" cy="54.5" r="1.2" fill="#fbf3f3"/><circle cx="52.6" cy="56.7" r="2.0" fill="#f7eef0"/><circle cx="12.3" cy="34.6" r="1.9" fill="#f7eef0"/><circle cx="25.8" cy="29.3" r="1.4" fill="#fbf3f3"/><circle cx="44.6" cy="81.5" r="2.0" fill="#c98a93"/><circle cx="50.5" cy="82.5" r="2.7" fill="#f3e2e4"/><circle cx="64.4" cy="38.5" r="1.3" fill="#c98a93"/><circle cx="71.2" cy="70.4" r="2.2" fill="#f7eef0"/><circle cx="32.9" cy="58.3" r="2.4" fill="#f3e2e4"/><circle cx="62.5" cy="40.6" r="2.2" fill="#d9b9bd"/><circle cx="36.0" cy="65.7" r="2.7" fill="#e9c9cf"/><circle cx="58.9" cy="95.8" r="2.6" fill="#5a3b3a"/><circle cx="69.6" cy="82.2" r="1.4" fill="#f0dadd"/><circle cx="20.7" cy="63.5" r="1.8" fill="#ead3d6"/><circle cx="42.9" cy="59.0" r="1.1" fill="#ead3d6"/><circle cx="22.3" cy="40.2" r="1.8" fill="#f4e9ea"/><circle cx="27.0" cy="47.5" r="1.3" fill="#f7eef0"/><circle cx="67.3" cy="40.3" r="1.2" fill="#f7eef0"/><circle cx="43.8" cy="94.8" r="1.6" fill="#e9c9cf"/><circle cx="69.6" cy="70.8" r="2.5" fill="#e8d8d6"/><circle cx="49.2" cy="65.3" r="2.1" fill="#fbf3f3"/><circle cx="46.5" cy="39.3" r="2.5" fill="#f4e9ea"/><circle cx="68.3" cy="91.0" r="2.7" fill="#f3e2e4"/><circle cx="22.1" cy="18.6" r="2.1" fill="#f7eef0"/><circle cx="53.7" cy="71.3" r="1.9" fill="#f7eef0"/><circle cx="32.1" cy="78.5" r="2.2" fill="#f3e2e4"/><circle cx="87.6" cy="60.5" r="2.7" fill="#f7eef0"/><circle cx="48.7" cy="67.2" r="2.2" fill="#f3e2e4"/><circle cx="31.8" cy="46.4" r="2.0" fill="#c98a93"/><circle cx="61.1" cy="72.9" r="2.8" fill="#f4e9ea"/><circle cx="54.3" cy="51.0" r="2.0" fill="#fbf3f3"/><circle cx="61.4" cy="78.5" r="1.3" fill="#c98a93"/><ellipse cx="58" cy="27" rx="4.2" ry="3" fill="#2e2424"/><ellipse cx="64" cy="31" rx="6" ry="2" fill="#5a4a48"/></g></g></svg>
<div style="position:absolute;left:1019px;top:7.200px;width:90px;height:24.800px;background:rgba(24,24,26,.38);border-radius:2px"></div><svg style="position:absolute;left:1056.70px;top:14.80px;overflow:visible;" width="14.00" height="8.00" viewBox="0 0 14 8"><path d="M.6 7.400l6.4-6.600 6.400 6.600" fill="none" stroke="#ece4de" stroke-width="1.5"/></svg>
<div style="position:absolute;left:962.40px;top:59.10px;width:160.60px;height:24.500px;background:#121315;border-radius:0 3.500px 3.500px 2px"></div>
<svg style="position:absolute;left:964.10px;top:61.70px;overflow:visible;" width="18.40" height="18.60" viewBox="0 0 18.4 18.6"><rect x="0" y="0" width="18.4" height="13.2" rx="1.6" fill="#fff"/><path d="M3.8 18.600c.4-1.800 1.200-2.800 2.400-2.800h6c1.200 0 2 1 2.400 2.800z" fill="#fff"/><path d="M5.2 10.400c.2-3 2-4.600 5.200-4.800v-2.200l4 3.600-4 3.600v-2.300c-2.400-.1-4 .5-5.200 2.100z" fill="#121315"/></svg>
<svg style="position:absolute;left:989.60px;top:61.80px;overflow:visible;" width="15.60" height="18.00" viewBox="0 0 15.6 18"><rect x="4.7" y="0" width="6.2" height="12.2" rx="3.1" fill="#e2e2e2"/><path d="M.8 8.4a7 7 0 0 0 14 0" fill="none" stroke="#e2e2e2" stroke-width="1.55"/><path d="M7.8 15.4v2.6" stroke="#e2e2e2" stroke-width="1.7"/><path d="M.4 16.2l14.800-14.600" stroke="#121315" stroke-width="2.7"/><path d="M.2 16.400l15.200-15" stroke="#e6453b" stroke-width="1.45"/></svg>
<svg role="img" aria-label="刘旎旎的屏幕共享" style="position:absolute;left:1012.20px;top:65.70px;overflow:visible;" width="105.60" height="17.16"><text x="0" y="11.62" font-size="13.2" fill="#fff" stroke="#fff" stroke-width=".158" textLength="105.60">刘旎旎的屏幕共享</text></svg>
<div style="position:absolute;left:959.600px;top:96.10px;width:199.800px;height:112.200px;box-sizing:border-box;border:2px solid #5e6267;border-right-color:#6b6e73;border-bottom-color:#6b6e73;border-radius:4px;background:#232427"></div>
<div style="position:absolute;left:1028.10px;top:112.00px;width:63px;height:63px;border-radius:50%;background:#0b6cff"></div><svg role="img" aria-label="王曦" style="position:absolute;left:1037.60px;top:132.70px;overflow:visible;" width="44.00" height="28.60"><text x="0" y="19.36" font-size="22" fill="#fff" stroke="#fff" stroke-width=".484" textLength="44.00">王曦</text></svg>
<div style="position:absolute;left:962.20px;top:181.90px;width:86.20px;height:24.500px;background:#121315;border-radius:0 3.500px 3.500px 2px"></div>
<div style="position:absolute;left:962.80px;top:181.90px;width:25.400px;height:24.900px;background:#ff8a1c;border-radius:0 0 0 2px"></div>
<svg style="position:absolute;left:966.60px;top:186.10px;overflow:visible;" width="17.60" height="17.40" viewBox="0 0 17.6 17.4"><circle cx="8.8" cy="4.6" r="4.2" fill="#fff"/><path d="M0 17.400c.2-5 3.400-7.600 8.800-7.600s8.600 2.600 8.800 7.600z" fill="#fff"/></svg>
<svg style="position:absolute;left:994.20px;top:184.60px;overflow:visible;" width="15.60" height="18.00" viewBox="0 0 15.6 18"><rect x="4.7" y="0" width="6.2" height="12.2" rx="3.1" fill="#e2e2e2"/><path d="M.8 8.4a7 7 0 0 0 14 0" fill="none" stroke="#e2e2e2" stroke-width="1.55"/><path d="M7.8 15.4v2.6" stroke="#e2e2e2" stroke-width="1.7"/><path d="M.4 16.2l14.800-14.600" stroke="#121315" stroke-width="2.7"/><path d="M.2 16.400l15.200-15" stroke="#e6453b" stroke-width="1.45"/></svg>
<svg role="img" aria-label="王曦" style="position:absolute;left:1016.80px;top:188.50px;overflow:visible;" width="26.40" height="17.16"><text x="0" y="11.62" font-size="13.2" fill="#fff" stroke="#fff" stroke-width=".158" textLength="26.40">王曦</text></svg>
<div style="position:absolute;left:959.600px;top:218.30px;width:199.800px;height:112.200px;box-sizing:border-box;border:2px solid #5e6267;border-right-color:#6b6e73;border-bottom-color:#6b6e73;border-radius:4px;background:#232427"></div>
<div style="position:absolute;left:1028.10px;top:234.20px;width:63px;height:63px;border-radius:50%;background:#0b6cff"></div><svg role="img" aria-label="旎旎" style="position:absolute;left:1037.60px;top:254.90px;overflow:visible;" width="44.00" height="28.60"><text x="0" y="19.36" font-size="22" fill="#fff" stroke="#fff" stroke-width=".484" textLength="44.00">旎旎</text></svg>
<div style="position:absolute;left:962.20px;top:304.10px;width:74.00px;height:24.500px;background:#121315;border-radius:0 3.500px 3.500px 2px"></div>
<svg style="position:absolute;left:968.80px;top:306.80px;overflow:visible;" width="15.60" height="18.00" viewBox="0 0 15.6 18"><rect x="4.7" y="0" width="6.2" height="12.2" rx="3.1" fill="#e2e2e2"/><path d="M.8 8.4a7 7 0 0 0 14 0" fill="none" stroke="#e2e2e2" stroke-width="1.55"/><path d="M7.8 15.4v2.6" stroke="#e2e2e2" stroke-width="1.7"/><path d="M.4 16.2l14.800-14.600" stroke="#121315" stroke-width="2.7"/><path d="M.2 16.400l15.200-15" stroke="#e6453b" stroke-width="1.45"/></svg>
<svg role="img" aria-label="刘旎旎" style="position:absolute;left:991.40px;top:310.70px;overflow:visible;" width="39.60" height="17.16"><text x="0" y="11.62" font-size="13.2" fill="#fff" stroke="#fff" stroke-width=".158" textLength="39.60">刘旎旎</text></svg>
<div style="position:absolute;left:959.600px;top:341.20px;width:199.800px;height:112.200px;box-sizing:border-box;border:2px solid #5e6267;border-right-color:#6b6e73;border-bottom-color:#6b6e73;border-radius:4px;background:#232427"></div>
<svg style="position:absolute;left:1027.80px;top:357.40px" width="62.8" height="62.8" viewBox="65 53 464 464"><defs><clipPath id="c4"><circle cx="297" cy="285" r="232"/></clipPath></defs><g clip-path="url(#c4)" stroke-linejoin="round"><rect x="60" y="50" width="480" height="480" fill="#f6dde2"/><path d="M205 408C280 385 410 378 445 395C470 412 468 445 440 472C400 505 320 520 255 508C248 470 228 432 205 408Z" fill="#e2412f" stroke="#141414" stroke-width="7"/><path d="M166 196C162 216 150 226 128 233C92 246 78 292 94 332C110 372 160 392 205 384C240 418 300 420 360 402C420 396 470 382 502 350C530 320 526 282 500 271C480 263 470 258 464 238C440 150 380 100 300 100C230 100 180 140 166 196Z" fill="#fcd2b3" stroke="#141414" stroke-width="7"/><path d="M162 196C166 126 238 74 322 78C428 84 490 160 508 296L462 250C452 226 440 206 424 192C408 200 390 196 380 176C376 160 364 150 350 150C340 178 318 186 300 170C290 150 280 130 268 118C264 150 246 168 224 162C222 148 224 138 230 128C200 140 176 166 162 196Z" fill="#0c0c0c"/><path d="M168 238C205 232 250 236 292 240M306 238C340 238 372 244 402 256" fill="none" stroke="#141414" stroke-width="5"/><path d="M352 432C368 410 398 408 420 420C440 434 430 468 400 478C372 484 350 466 352 432Z" fill="#fcd2b3" stroke="#141414" stroke-width="6"/><path d="M138 440C160 420 250 424 276 452L262 520H170Z" fill="#a9dccf" stroke="#46565c" stroke-width="6"/><ellipse cx="207" cy="441" rx="70" ry="17" transform="rotate(8 207 441)" fill="#c9ece4" stroke="#46565c" stroke-width="6"/><path d="M197 420L212 372 240 352" fill="none" stroke="#33425a" stroke-width="14"/><path d="M197 420L212 372 240 352" fill="none" stroke="#93b4d8" stroke-width="7"/><path d="M240 495C262 480 310 486 330 502L320 520H245Z" fill="#fcd2b3" stroke="#141414" stroke-width="6"/></g></svg>
<div style="position:absolute;left:962.20px;top:427.00px;width:142.64px;height:24.500px;background:#121315;border-radius:0 3.500px 3.500px 2px"></div>
<svg style="position:absolute;left:968.80px;top:429.70px;overflow:visible;" width="15.60" height="18.00" viewBox="0 0 15.6 18"><rect x="4.7" y="0" width="6.2" height="12.2" rx="3.1" fill="#e2e2e2"/><path d="M.8 8.4a7 7 0 0 0 14 0" fill="none" stroke="#e2e2e2" stroke-width="1.55"/><path d="M7.8 15.4v2.6" stroke="#e2e2e2" stroke-width="1.7"/><path d="M.4 16.2l14.800-14.600" stroke="#121315" stroke-width="2.7"/><path d="M.2 16.400l15.200-15" stroke="#e6453b" stroke-width="1.45"/></svg>
<svg role="img" aria-label="材加14党支部陈昊" style="position:absolute;left:991.40px;top:433.60px;overflow:visible;" width="108.24" height="17.16"><text x="0" y="11.62" font-size="13.2" fill="#fff" stroke="#fff" stroke-width=".158" textLength="108.24">材加14党支部陈昊</text></svg>
<div style="position:absolute;left:959.600px;top:463.40px;width:199.800px;height:112.200px;box-sizing:border-box;border:2px solid #5e6267;border-right-color:#6b6e73;border-bottom-color:#6b6e73;border-radius:4px;background:#232427"></div>
<svg style="position:absolute;left:1027.90px;top:479.60px" width="62.8" height="62.8" viewBox="66 66 464 464"><defs><clipPath id="c5"><circle cx="298" cy="298" r="232"/></clipPath><linearGradient id="sky5" x1="0" y1="0" x2="0" y2="1"><stop offset="0" stop-color="#2e467c"/><stop offset=".35" stop-color="#6482b8"/><stop offset=".7" stop-color="#94a8cc"/><stop offset="1" stop-color="#c9b49a"/></linearGradient><filter id="b5" x="-10%" y="-10%" width="120%" height="120%"><feGaussianBlur stdDeviation="3"/></filter></defs><g clip-path="url(#c5)"><rect x="60" y="60" width="480" height="480" fill="#29231f"/><g filter="url(#b5)"><path d="M78 200L240 88 300 130 430 120 520 200 530 300 470 330 405 300 375 305 262 355 262 400 90 400Z" fill="url(#sky5)"/><path d="M250 70C330 60 420 80 440 130C450 170 420 190 400 200L395 270 370 275 372 230C340 240 300 250 285 215C290 180 300 160 290 140Z" fill="#1f1c1a"/><path d="M128 400L138 300 118 210 132 200 150 290 148 400Z" fill="#1d1a18"/><path d="M120 250L180 160 195 165 140 260Z" fill="#2a2622"/><path d="M66 240C90 235 105 260 100 300 95 330 80 345 66 350Z" fill="#1d1a18"/><path d="M458 150h14v180h-14z" fill="#1f1c1a"/><path d="M490 200C520 190 540 230 530 280L500 270Z" fill="#1f1c1a"/><path d="M258 356L372 306V270h34v32l66 30 70-46V420H258Z" fill="#1b1816"/><path d="M66 380C120 372 180 392 262 398V540H66Z" fill="#231e1a"/><path d="M186 400c4-30 26-46 44-30 14 12 22 22 30 30z" fill="#1d1a18"/><rect x="300" y="360" width="42" height="30" fill="#e9a544"/></g></g></svg>
<div style="position:absolute;left:962.20px;top:549.20px;width:106.88px;height:24.500px;background:#121315;border-radius:0 3.500px 3.500px 2px"></div>
<svg style="position:absolute;left:968.80px;top:551.90px;overflow:visible;" width="15.60" height="18.00" viewBox="0 0 15.6 18"><rect x="4.7" y="0" width="6.2" height="12.2" rx="3.1" fill="#f2f2f2"/><path d="M.8 8.4a7 7 0 0 0 14 0" fill="none" stroke="#f2f2f2" stroke-width="1.55"/><path d="M7.8 15.4v2.6" stroke="#f2f2f2" stroke-width="1.7"/></svg>
<svg role="img" aria-label="材加九-余恒" style="position:absolute;left:991.40px;top:555.80px;overflow:visible;" width="72.48" height="17.16"><text x="0" y="11.62" font-size="13.2" fill="#fff" stroke="#fff" stroke-width=".158" textLength="72.48">材加九-余恒</text></svg>
<div style="position:absolute;left:959.600px;top:585.60px;width:199.800px;height:112.200px;box-sizing:border-box;border:2px solid #5e6267;border-right-color:#6b6e73;border-bottom-color:#6b6e73;border-radius:4px;background:#232427"></div>

<div style="position:absolute;left:941.400px;top:203.800px;width:9px;height:44px;box-sizing:border-box;border-radius:3px 0 0 3px;background:#4b4e60;border:1px solid #777b90;border-right:none"></div>
<div style="position:absolute;left:945.00px;top:208.60px;width:3.00px;height:1.50px;background:#3a3c48;"></div>
<div style="position:absolute;left:945.00px;top:211.45px;width:3.00px;height:1.50px;background:#3a3c48;"></div>
<div style="position:absolute;left:945.00px;top:214.30px;width:3.00px;height:1.50px;background:#3a3c48;"></div>
<div style="position:absolute;left:945.00px;top:217.15px;width:3.00px;height:1.50px;background:#3a3c48;"></div>
<div style="position:absolute;left:945.00px;top:220.00px;width:3.00px;height:1.50px;background:#3a3c48;"></div>
<div style="position:absolute;left:945.00px;top:222.85px;width:3.00px;height:1.50px;background:#c6d24a;"></div>
<div style="position:absolute;left:945.00px;top:225.70px;width:3.00px;height:1.50px;background:#c6d24a;"></div>
<div style="position:absolute;left:945.00px;top:228.55px;width:3.00px;height:1.50px;background:#c6d24a;"></div>
<div style="position:absolute;left:945.00px;top:231.40px;width:3.00px;height:1.50px;background:#c6d24a;"></div>
<div style="position:absolute;left:945.00px;top:234.25px;width:3.00px;height:1.50px;background:#43c2a6;"></div>
<div style="position:absolute;left:945.00px;top:237.10px;width:3.00px;height:1.50px;background:#43c2a6;"></div>
<div style="position:absolute;left:945.00px;top:239.95px;width:3.00px;height:1.50px;background:#43c2a6;"></div>
<div style="position:absolute;left:945.00px;top:242.80px;width:3.00px;height:1.50px;background:#43c2a6;"></div>
<div style="position:absolute;left:929px;top:311.200px;width:20.400px;height:49.600px;border-radius:4.500px 0 0 4.500px;background:#6d6d6d"></div>
<svg style="position:absolute;left:935.60px;top:329.40px;overflow:visible;" width="8.60" height="14.40" viewBox="0 0 8.6 14.4"><path d="M1 .8l6.600 6.400-6.600 6.400" fill="none" stroke="#b9b9b9" stroke-width="1.6"/></svg>
<div style="position:absolute;left:951.80px;top:321.50px;width:1.10px;height:30.00px;background:#c3c7cb;"></div>
<div style="position:absolute;left:956.00px;top:321.50px;width:1.10px;height:30.00px;background:#c3c7cb;"></div>
</body></html>
